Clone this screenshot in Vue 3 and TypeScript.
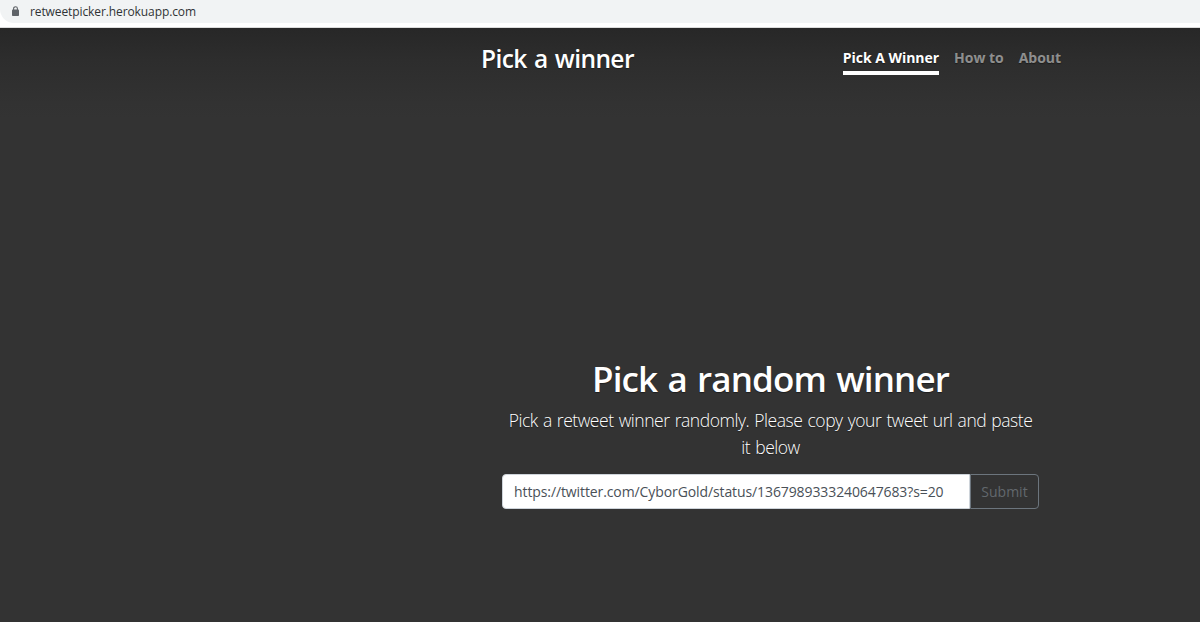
<template>
  <div class="browser">
    <div class="toolbar">
      <div class="address-bar">
        <svg class="lock" width="7" height="10" viewBox="0 0 7 10" aria-hidden="true">
          <path d="M1.6 4.5V2.6a1.9 1.9 0 0 1 3.8 0v1.9" fill="none" stroke="#5f6368" stroke-width="1.1" />
          <rect x="0" y="3.5" width="7" height="6.5" rx="0.8" fill="#5f6368" />
        </svg>
        <span class="address">retweetpicker.herokuapp.com</span>
      </div>
    </div>

    <div class="page">
      <div class="cover">
        <header class="masthead">
          <h3 class="brand">Pick a winner</h3>
          <nav class="nav">
            <a
              v-for="link in links"
              :key="link.id"
              class="nav-link"
              :class="{'active': link.id === activeLink}"
              href="#"
              @click.prevent="activeLink = link.id">{{ link.label }}</a>
          </nav>
        </header>

        <main class="inner">
          <h1 class="heading">Pick a random winner</h1>
          <p class="lead">
            Pick a retweet winner randomly. Please copy your tweet url and paste<br>
            it below
          </p>
          <form class="input-group" @submit.prevent>
            <input v-model="tweetUrl" class="form-control" type="text" aria-label="Tweet url">
            <button class="btn" type="submit" disabled>Submit</button>
          </form>
        </main>
      </div>
    </div>
  </div>
</template>

<script setup lang="ts">
import { ref } from 'vue';

interface NavLink {
  id: string;
  label: string;
}

const links: NavLink[] = [
  { id: 'pick', label: 'Pick A Winner' },
  { id: 'how', label: 'How to' },
  { id: 'about', label: 'About' }
];

const activeLink = ref('pick');
const tweetUrl = ref('https://twitter.com/CyborGold/status/1367989333240647683?s=20');
</script>

<style>
body {
  margin: 0;
  overflow: hidden;
}
</style>

<style scoped>
.browser {
  display: flex;
  flex-direction: column;
  height: 622px;
  overflow: hidden;
  background-color: white;
  font-family: "Segoe UI", "Open Sans", "Noto Sans", sans-serif;
}

.toolbar {
  box-sizing: border-box;
  height: 28px;
  flex: none;
  border-bottom: 1px solid #dcdcdc;
}

.address-bar {
  box-sizing: border-box;
  display: flex;
  align-items: center;
  height: 23px;
  padding-left: 12px;
  border-radius: 0 0 0 14px;
  background-color: #f1f3f4;
}

.lock {
  margin-right: 11px;
  margin-bottom: 2px;
}

.address {
  color: #303336;
  font-size: 12px;
  letter-spacing: -0.1px;
  line-height: 23px;
  white-space: nowrap;
}

.page {
  flex: 1;
  background: linear-gradient(#272727 0, #2d2d2d 32px, #323232 75px, #333 90px);
  color: white;
  text-shadow: 0 1px 1px rgba(0, 0, 0, 0.4);
}

.cover {
  width: 580px;
  margin-left: 481px;
}

.masthead {
  display: flex;
  justify-content: space-between;
  height: 47px;
  padding-top: 14px;
}

.brand {
  margin: 0;
  font-size: 24.5px;
  font-weight: 600;
  letter-spacing: -0.6px;
  line-height: 34px;
  white-space: nowrap;
  word-spacing: 1.5px;
}

.nav {
  display: flex;
  gap: 15px;
}

.nav-link {
  height: 29px;
  border-bottom: 4px solid transparent;
  color: rgba(255, 255, 255, 0.5);
  font-size: 14px;
  font-weight: 700;
  letter-spacing: -0.03px;
  line-height: 31px;
  text-decoration: none;
  white-space: nowrap;
}

.nav-link.active {
  border-bottom-color: white;
  color: white;
}

.inner {
  padding: 268px 22px 0 21px;
  text-align: center;
}

.heading {
  margin: 0;
  font-size: 35px;
  font-weight: 600;
  letter-spacing: -0.88px;
  line-height: 44px;
  white-space: nowrap;
  word-spacing: 2px;
}

.lead {
  margin: 6px 0 13px;
  font-size: 17.5px;
  font-weight: 300;
  letter-spacing: -0.46px;
  line-height: 27px;
  white-space: nowrap;
  word-spacing: 1px;
}

.input-group {
  display: flex;
  height: 35px;
}

.form-control {
  box-sizing: border-box;
  flex: 1;
  min-width: 0;
  padding: 0 11px;
  border: 1px solid #ced4da;
  border-radius: 4px 0 0 4px;
  outline: none;
  background-color: white;
  color: #495057;
  font-family: inherit;
  font-size: 14px;
  letter-spacing: -0.1px;
}

.btn {
  box-sizing: border-box;
  width: 69px;
  padding: 0;
  border: 1px solid #6c757d;
  border-radius: 0 4px 4px 0;
  background: transparent;
  color: #62686d;
  font-family: inherit;
  font-size: 14px;
}
</style>
